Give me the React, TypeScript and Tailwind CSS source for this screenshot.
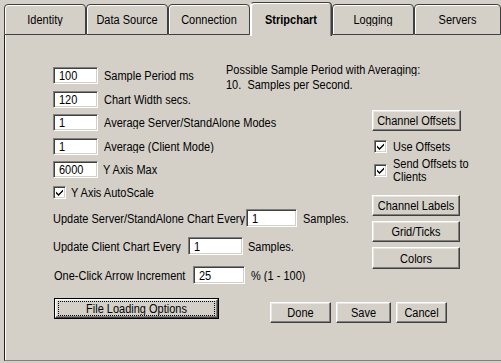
import React from "react";

const T = ({ children, bold }: { children: React.ReactNode; bold?: boolean }) => (
  <span className={`inline-block scale-y-[1.15] whitespace-pre leading-none ${bold ? "font-bold" : ""}`}>{children}</span>
);

const sunken =
  "border border-t-[#808080] border-l-[#808080] border-b-white border-r-white shadow-[inset_1px_1px_0_#404040,inset_-1px_-1px_0_#d4d0c8] bg-white";
const raised =
  "border border-t-white border-l-white border-b-[#404040] border-r-[#404040] shadow-[inset_-1px_-1px_0_#808080,inset_1px_1px_0_#e8e6e0]";

const Input = ({ value, w }: { value: string; w: string }) => (
  <div className={`${sunken} ${w} h-full flex items-center pl-[5px] shrink-0`}>
    <T>{value}</T>
  </div>
);

const Check = () => (
  <div className={`${sunken} w-[13px] h-[13px] shrink-0 flex items-center justify-center`}>
    <svg width="9" height="9" viewBox="0 0 9 9">
      <path d="M1 3.5 L3.5 6 L8 1.5 L8 3.5 L3.5 8 L1 5.5 Z" fill="#000" />
    </svg>
  </div>
);

const Btn = ({ label, w, h = "h-[21px]" }: { label: string; w: string; h?: string }) => (
  <div className={`${raised} ${w} ${h} flex items-center justify-center shrink-0`}>
    <T>{label}</T>
  </div>
);

const Tab = ({ label, w, selected }: { label: string; w: string; selected?: boolean }) =>
  selected ? (
    <div className={`${w} h-[34px] border-t border-r border-t-[#404040] border-r-[#404040] border-l border-l-white rounded-t-[4px] shadow-[inset_1px_1px_0_#ffffff,inset_-1px_0_0_#808080] flex items-center justify-center pb-[1px] shrink-0 relative z-10 -mb-[1px] bg-[#d4d0c8]`}>
      <T bold>{label}</T>
    </div>
  ) : (
    <div className={`${w} h-[31px] border border-[#404040] rounded-t-[4px] shadow-[inset_1px_1px_0_#ffffff] flex items-center justify-center pb-[1px] shrink-0`}>
      <T>{label}</T>
    </div>
  );

export default function App() {
  return (
    <div className="w-[501px] h-[363px] bg-[#d4d0c8] pl-[4px] overflow-hidden text-[11px] text-black font-['Liberation_Sans',Arial,sans-serif]">
      {/* tabs */}
      <div className="flex items-end h-[35px]">
        <Tab label="Identity" w="w-[82px]" />
        <Tab label="Data Source" w="w-[82px]" />
        <Tab label="Connection" w="w-[82px]" />
        <Tab label="Stripchart" w="w-[82px]" selected />
        <Tab label="Logging" w="w-[82px]" />
        <Tab label="Servers" w="w-[87px]" />
      </div>

      {/* panel */}
      <div className="h-[326px] border-l border-l-[#202020] border-b border-b-[#808080] shadow-[inset_1px_0_0_#ffffff] pt-[26px]">
        <div className="flex">
          {/* left area */}
          <div className="w-[367px] pl-[48px]">
            <div className="flex">
              <div className="w-[173px] pt-[6px] flex flex-col gap-[6.5px]">
                {[
                  ["100", "Sample Period ms"],
                  ["120", "Chart Width secs."],
                  ["1", "Average Server/StandAlone Modes"],
                  ["1", "Average (Client Mode)"],
                  ["6000", "Y Axis Max"],
                ].map(([v, l], i) => (
                  <div key={i} className="h-[17px] flex items-center">
                    <Input value={v} w="w-[45px]" />
                    <div className={i === 4 ? "ml-[5px]" : "ml-[6px]"}>
                      <T>{l}</T>
                    </div>
                  </div>
                ))}
                <div className="h-[14px] mt-[0.5px] flex items-center">
                  <Check />
                  <div className="ml-[5px]">
                    <T>Y Axis AutoScale</T>
                  </div>
                </div>
              </div>
              <div className="flex flex-col leading-[15px] pt-[0.5px]">
                <div className="h-[15px] flex items-center">
                  <T>Possible Sample Period with Averaging:</T>
                </div>
                <div className="h-[15px] flex items-center">
                  <T>10.  Samples per Second.</T>
                </div>
              </div>
            </div>

            <div className="mt-[10px] h-[18px] flex items-center">
              <div className="w-[193px]">
                <T>Update Server/StandAlone Chart Every</T>
              </div>
              <Input value="1" w="w-[51px]" />
              <div className="ml-[6px]">
                <T>Samples.</T>
              </div>
            </div>
            <div className="mt-[10px] h-[18px] flex items-center">
              <div className="w-[135px]">
                <T>Update Client Chart Every</T>
              </div>
              <Input value="1" w="w-[55px]" />
              <div className="ml-[5px]">
                <T>Samples.</T>
              </div>
            </div>
            <div className="mt-[11px] h-[18px] flex items-center pl-[1px]">
              <div className="w-[139px]">
                <T>One-Click Arrow Increment</T>
              </div>
              <Input value="25" w="w-[52px]" />
              <div className="ml-[6px]">
                <T>% (1 - 100)</T>
              </div>
            </div>
          </div>

          {/* right column */}
          <div className="w-[90px] pt-[49px] flex flex-col">
            <Btn label="Channel Offsets" w="w-[89px]" />
            <div className="mt-[9px] h-[13px] flex items-center pl-[2px]">
              <Check />
              <div className="ml-[6px]">
                <T>Use Offsets</T>
              </div>
            </div>
            <div className="mt-[4px] flex items-center pl-[2px]">
              <Check />
              <div className="ml-[6px] flex flex-col">
                <div className="h-[13px] flex items-center">
                  <T>Send Offsets to</T>
                </div>
                <div className="h-[13px] flex items-center">
                  <T>Clients</T>
                </div>
              </div>
            </div>
            <div className="mt-[12px] flex flex-col gap-[5px]">
              <Btn label="Channel Labels" w="w-[88px]" />
              <Btn label="Grid/Ticks" w="w-[88px]" />
              <Btn label="Colors" w="w-[88px]" h="h-[22px]" />
            </div>
          </div>
        </div>

        {/* bottom row */}
        <div className="mt-[14px] flex items-start pl-[49px]">
          <div className="w-[165px] h-[21px] border border-black shrink-0">
            <div className={`${raised} w-full h-full px-[2px] py-[1px]`}>
              <div className="w-full h-full border border-dotted border-black flex items-center justify-center pb-[1px]">
                <T>File Loading Options</T>
              </div>
            </div>
          </div>
          <div className="ml-[51px] mt-[4px] flex gap-[5px]">
            <Btn label="Done" w="w-[61px]" />
            <Btn label="Save" w="w-[55px]" />
            <Btn label="Cancel" w="w-[51px]" />
          </div>
        </div>
      </div>
    </div>
  );
}
